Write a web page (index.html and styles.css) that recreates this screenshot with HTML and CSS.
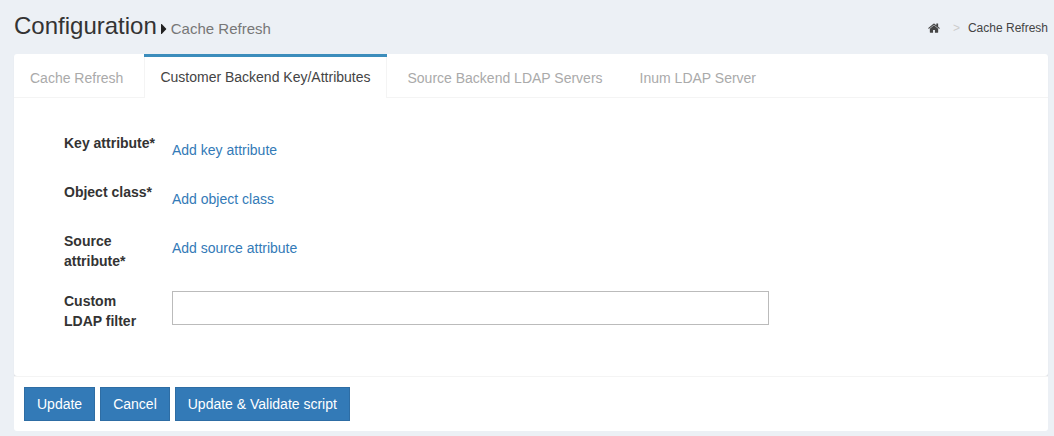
FILE: index.html
```html
<!DOCTYPE html>
<html lang="en">
<head>
<meta charset="utf-8">
<title>Configuration - Cache Refresh</title>
<link rel="stylesheet" href="styles.css">
</head>
<body>
<header class="page-header">
  <h1 class="title">Configuration<svg class="caret" viewBox="0 0 6 10" aria-hidden="true"><path d="M0 .5Q0-.5 1 .3L5 4.4Q5.500 5 5 5.600L1 9.700Q0 10.500 0 9.500Z"/></svg><small class="subtitle">Cache Refresh</small></h1>
  <nav class="breadcrumb" aria-label="Breadcrumb">
    <a class="home" href="#" aria-label="Home"><svg viewBox="0 0 1664 1312" aria-hidden="true"><path d="M1408 768v480q0 26-19 45t-45 19H960V928H704v384H320q-26 0-45-19t-19-45V768l1-6 575-474 575 474q1 2 1 6zm223-69l-62 74q-8 9-21 11h-3q-13 0-21-7L832 200 140 777q-12 8-24 7-13-2-21-11l-62-74q-8-10-7-23t11-21L756 56q32-26 76-26t76 26l244 204V65q0-14 9-23t23-9h192q14 0 23 9t9 23v408l219 182q10 8 11 21t-7 23z"/></svg></a>
    <span class="divider">&gt;</span>
    <a class="current" href="#">Cache Refresh</a>
  </nav>
</header>
<main>
  <form>
    <section class="panel">
      <nav class="tabs">
        <a class="tab" href="#">Cache Refresh</a>
        <a class="tab active" href="#" aria-current="page">Customer Backend Key/Attributes</a>
        <a class="tab" href="#">Source Backend LDAP Servers</a>
        <a class="tab" href="#">Inum LDAP Server</a>
      </nav>
      <div class="fields">
        <div class="row"><span class="label">Key attribute*</span><a class="add" href="#">Add key attribute</a></div>
        <div class="row"><span class="label">Object class*</span><a class="add" href="#">Add object class</a></div>
        <div class="row tall"><span class="label">Source attribute*</span><a class="add" href="#">Add source attribute</a></div>
        <div class="row tall"><label class="label" for="filter">Custom LDAP filter</label><input class="input" id="filter" type="text"></div>
      </div>
    </section>
    <footer class="actions">
      <button class="button" type="button">Update</button>
      <button class="button" type="button">Cancel</button>
      <button class="button" type="button">Update &amp; Validate script</button>
    </footer>
  </form>
</main>
</body>
</html>
```

FILE: styles.css
```css
* { box-sizing: border-box; }
body {
  margin: 0;
  padding: 0 6px 5px 14px;
  background: #ecf0f5;
  color: #333;
  font: 14px/20px "Liberation Sans", Arial, sans-serif;
}
a { color: #337ab7; text-decoration: none; }
.page-header {
  display: flex;
  align-items: flex-start;
  justify-content: space-between;
  height: 54px;
}
.title {
  display: flex;
  align-items: baseline;
  margin: 0;
  padding-top: 13px;
  font-size: 24px;
  font-weight: 400;
  line-height: 26px;
}
.caret { width: 6px; height: 10px; margin: 0 4px; fill: #222; }
.subtitle { color: #777; font-size: 15px; }
.breadcrumb { display: flex; align-items: center; padding-top: 18px; font-size: 12px; }
.breadcrumb a { color: #444; }
.breadcrumb .home { display: flex; }
.home svg { width: 12px; height: 10px; fill: #444; }
.divider { margin: 0 8px 0 13px; color: #ccc; }
.panel {
  background: #fff;
  border-radius: 3px;
  box-shadow: 0 1px 1px rgba(0, 0, 0, 0.1);
}
.tabs { display: flex; gap: 5px; height: 44px; border-bottom: 1px solid #f4f4f4; }
.tab { padding: 14px 16px 9px; color: #aaa; }
.tab.active {
  height: 44px;
  padding-top: 10px;
  border-top: 3px solid #3c8dbc;
  background: #fff;
  box-shadow: inset 1px 0 #f4f4f4, inset -1px 0 #f4f4f4;
  color: #444;
}
.fields { display: grid; gap: 15px; padding: 35px 50px 40px; }
.row { display: grid; grid-template-columns: 92px minmax(0, 597px); column-gap: 16px; min-height: 34px; }
.row.tall { min-height: 45px; }
.label { font-weight: 700; }
.add { justify-self: start; padding-top: 7px; }
.input { width: 100%; height: 34px; padding: 6px 12px; border: 1px solid #bbb; background: #fff; font: inherit; }
.actions {
  position: relative;
  display: flex;
  gap: 5px;
  padding: 10px;
  border-top: 1px solid #f4f4f4;
  border-radius: 0 0 3px 3px;
  background: #fff;
}
.button { height: 34px; padding: 0 12px; border: 1px solid #2e6da4; background: #337ab7; color: #fff; font: inherit; }
```
